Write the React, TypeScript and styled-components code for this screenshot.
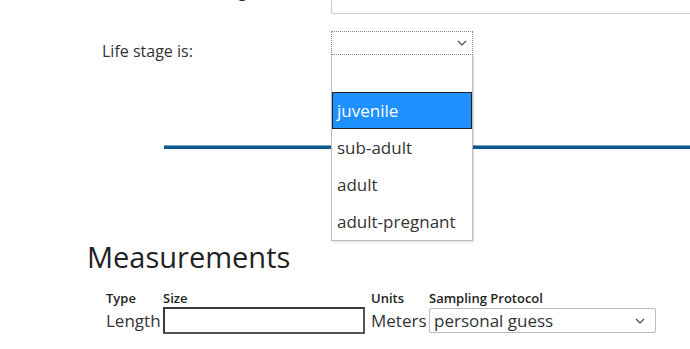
import React from 'react';
import styled, { createGlobalStyle } from 'styled-components';

const GlobalStyle = createGlobalStyle`
    html, body {
        margin: 0;
        padding: 0;
        background: #fff;
        overflow: hidden;
    }
    body {
        font-family: "Open Sans", "Liberation Sans", sans-serif;
        color: #333;
    }
`

const Page = styled.div`
    width: 690px;
    margin-top: -20px;
`

const FormRow = styled.div<{ gap?: number }>`
    display: grid;
    grid-template-columns: 229px 1fr;
    padding-left: 102px;
    margin-bottom: ${p => p.gap || 0}px;
`

const Label = styled.label<{ offset?: number }>`
    font-size: 16px;
    padding-top: ${p => p.offset || 0}px;
    color: #333;
`

const TextBox = styled.div`
    height: 32px;
    border: 1px solid #ccc;
    border-right: none;
    border-radius: 3px 0 0 3px;
`

const SelectWrap = styled.div`
    position: relative;
    width: 142px;
`

const SelectBox = styled.div`
    height: 22px;
    border: 1px dotted #888;
    display: flex;
    align-items: center;
    justify-content: flex-end;
    padding-right: 5px;
`

const ListBox = styled.ul`
    position: absolute;
    top: 24px;
    left: 0;
    width: 140px;
    margin: 0;
    padding: 0;
    list-style: none;
    background: #fff;
    border: 1px solid #bbb;
    border-top: none;
    box-shadow: 1px 1px 2px rgba(0, 0, 0, 0.15);
    z-index: 2;
`

const Option = styled.li<{ selected?: boolean }>`
    height: 37px;
    box-sizing: border-box;
    display: flex;
    align-items: center;
    padding-left: 4px;
    font-size: 17px;
    color: ${p => (p.selected ? '#fff' : '#333')};
    background: ${p => (p.selected ? '#1e90ff' : 'transparent')};
    border: 1px solid ${p => (p.selected ? '#222' : 'transparent')};
`

const Rule = styled.hr`
    margin: 83px 0 0 164px;
    height: 3px;
    border: none;
    border-top: 1px solid #7aa3c2;
    background: #0a5a8e;
`

const Heading = styled.h2`
    margin: 88px 0 0 87px;
    font-size: 29px;
    font-weight: 400;
    color: #222;
    line-height: normal;
`

const Grid = styled.div`
    display: grid;
    grid-template-columns: 57px 208px 58px 227px;
    margin: 15px 0 0 106px;
    row-gap: 1px;
    align-items: center;
`

const ColHead = styled.div`
    font-size: 13px;
    font-weight: 600;
    line-height: 15px;
    color: #222;
`

const Cell = styled.div`
    font-size: 17px;
    color: #333;
`

const SizeInput = styled.div`
    width: 198px;
    height: 23px;
    border: 2px solid #3a3a3a;
    border-right-color: #555;
    border-bottom-color: #555;
`

const ProtocolSelect = styled.div`
    height: 23px;
    border: 1px solid #bbb;
    border-radius: 2px;
    display: flex;
    align-items: center;
    justify-content: space-between;
    padding: 0 10px 0 4px;
    font-size: 17px;
    color: #333;
`

const Chevron = () => (
    <svg width="10" height="6" viewBox="0 0 10 6">
        <path d="M1 1 L5 5 L9 1" fill="none" stroke="#444" strokeWidth="1.1" />
    </svg>
)

const stages = ['', 'juvenile', 'sub-adult', 'adult', 'adult-pregnant'];

export default function App() {
    return (
        <>
            <GlobalStyle />
            <Page>
                <FormRow gap={17}>
                    <Label offset={0}>Noticeable Scarring</Label>
                    <TextBox />
                </FormRow>

                <FormRow>
                    <Label offset={9}>Life stage is:</Label>
                    <SelectWrap>
                        <SelectBox><Chevron /></SelectBox>
                        <ListBox>
                            {stages.map((stage, index) => (
                                <Option key={index} selected={stage === 'juvenile'}>
                                    {stage}
                                </Option>
                            ))}
                        </ListBox>
                    </SelectWrap>
                </FormRow>

                <Rule />

                <Heading>Measurements</Heading>

                <Grid>
                    <ColHead>Type</ColHead>
                    <ColHead>Size</ColHead>
                    <ColHead>Units</ColHead>
                    <ColHead>Sampling Protocol</ColHead>
                    <Cell>Length</Cell>
                    <SizeInput />
                    <Cell>Meters</Cell>
                    <ProtocolSelect>
                        personal guess
                        <Chevron />
                    </ProtocolSelect>
                </Grid>
            </Page>
        </>
    );
}
